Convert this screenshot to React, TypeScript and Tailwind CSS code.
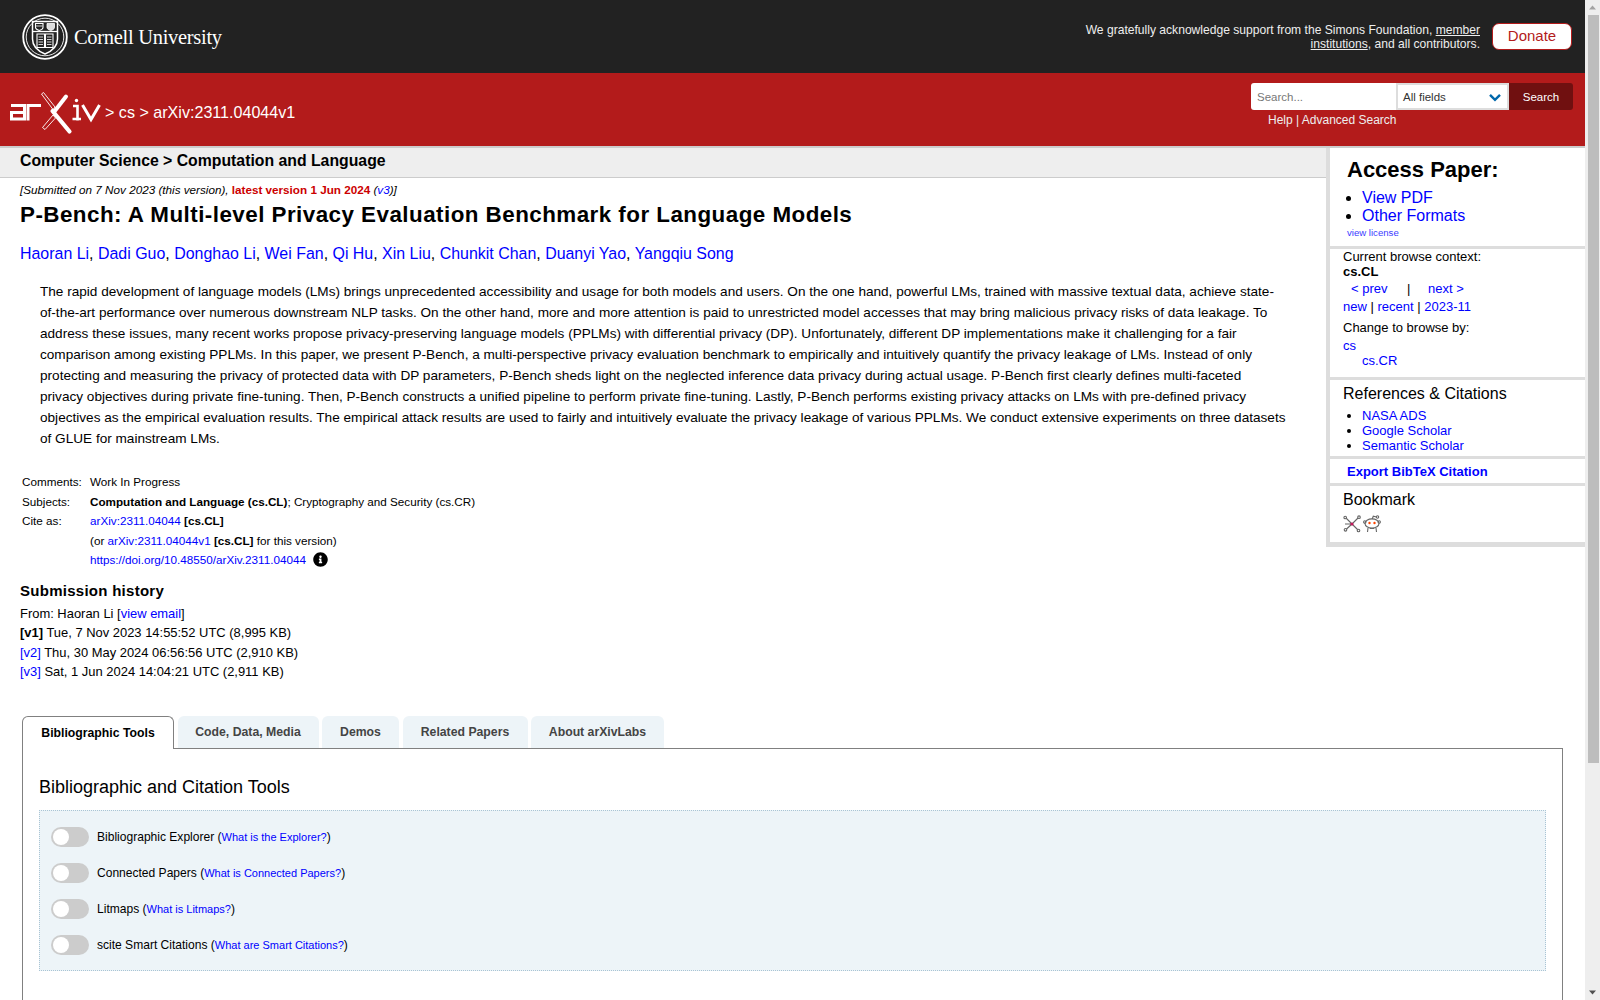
import { FaInfoCircle } from "react-icons/fa";

const authors = [
  "Haoran Li",
  "Dadi Guo",
  "Donghao Li",
  "Wei Fan",
  "Qi Hu",
  "Xin Liu",
  "Chunkit Chan",
  "Duanyi Yao",
  "Yangqiu Song",
];

const abstractText =
  "The rapid development of language models (LMs) brings unprecedented accessibility and usage for both models and users. On the one hand, powerful LMs, trained with massive textual data, achieve state-of-the-art performance over numerous downstream NLP tasks. On the other hand, more and more attention is paid to unrestricted model accesses that may bring malicious privacy risks of data leakage. To address these issues, many recent works propose privacy-preserving language models (PPLMs) with differential privacy (DP). Unfortunately, different DP implementations make it challenging for a fair comparison among existing PPLMs. In this paper, we present P-Bench, a multi-perspective privacy evaluation benchmark to empirically and intuitively quantify the privacy leakage of LMs. Instead of only protecting and measuring the privacy of protected data with DP parameters, P-Bench sheds light on the neglected inference data privacy during actual usage. P-Bench first clearly defines multi-faceted privacy objectives during private fine-tuning. Then, P-Bench constructs a unified pipeline to perform private fine-tuning. Lastly, P-Bench performs existing privacy attacks on LMs with pre-defined privacy objectives as the empirical evaluation results. The empirical attack results are used to fairly and intuitively evaluate the privacy leakage of various PPLMs. We conduct extensive experiments on three datasets of GLUE for mainstream LMs.";

const tabs = [
  { label: "Code, Data, Media", width: "w-[141px]" },
  { label: "Demos", width: "w-[77px]" },
  { label: "Related Papers", width: "w-[125px]" },
  { label: "About arXivLabs", width: "w-[133px]" },
];

const tools = [
  { name: "Bibliographic Explorer", link: "What is the Explorer?" },
  { name: "Connected Papers", link: "What is Connected Papers?" },
  { name: "Litmaps", link: "What is Litmaps?" },
  { name: "scite Smart Citations", link: "What are Smart Citations?" },
];

function CornellSeal() {
  return (
    <svg width="46" height="46" viewBox="0 0 46 46" fill="none" stroke="#fff" className="shrink-0">
      <circle cx="23" cy="23" r="21.8" strokeWidth="1.8" />
      <circle cx="23" cy="23" r="18.8" strokeWidth="0.9" />
      <path d="M10.5 7.5H35.5V25C35.5 33 29 37.5 23 40C17 37.5 10.5 33 10.5 25Z" strokeWidth="1.5" />
      <path d="M11 17.5H35" strokeWidth="1.3" />
      <path d="M13.5 9.5H21V13.5C21 15 19 16 17.2 16.5C15.5 16 13.5 15 13.5 13.5Z" strokeWidth="1.1" />
      <path d="M25 9.5H32.5V13.5C32.5 15 30.5 16 28.8 16.5C27 16 25 15 25 13.5Z" fill="#ddd" strokeWidth="0.8" />
      <path d="M14 12H20.5" strokeWidth="0.8" />
      <path d="M15 20H22.5V33.5H15ZM23.5 20H31V33.5H23.5Z" strokeWidth="1.1" />
      <path d="M16.5 23H21M16.5 25.5H21M16.5 28H21M16.5 30.5H21M25 23H29.5M25 25.5H29.5M25 28H29.5M25 30.5H29.5" strokeWidth="0.8" />
    </svg>
  );
}

function ArxivLogo() {
  return (
    <svg width="100" height="50" viewBox="0 0 100 50" fill="none" stroke="#fff" className="shrink-0">
      <path d="M6 17.5H19.5V31H6.5V24.5H19.5" strokeWidth="3" />
      <path d="M23 32.5V17.5H36" strokeWidth="3" />
      <path d="M61 8.5L49 24" strokeWidth="4" strokeLinecap="round" />
      <path d="M48 27L37.5 39.5L40 41.5L50.5 30Z" strokeWidth="0.9" />
      <path d="M36.5 6L38.5 4.5L50 19L48 21.5Z" strokeWidth="0.9" />
      <path d="M47.5 23L64.5 43.5" strokeWidth="4.2" strokeLinecap="round" />
      <path d="M68 18H72.5V32.5M67.5 31H76" strokeWidth="2.6" />
      <circle cx="71.5" cy="12.5" r="1.7" fill="#fff" stroke="none" />
      <path d="M77.5 17L86 31.5L94.5 17" strokeWidth="3" />
    </svg>
  );
}

function BibsonomyIcon() {
  return (
    <svg width="18" height="18" viewBox="0 0 18 18" fill="none" stroke="#666" strokeWidth="1.1" className="shrink-0">
      <path d="M2 2L9 9L15.5 15.5M16 2L9 9L3 14.5M9 9L2 9" />
      <circle cx="2.2" cy="2.5" r="1.3" fill="#fff" />
      <circle cx="15.5" cy="15.5" r="1.3" fill="#fff" />
      <circle cx="2.5" cy="14.8" r="1.3" fill="#fff" />
      <circle cx="16" cy="2.2" r="1.3" fill="#fff" />
      <circle cx="9" cy="9" r="1.6" fill="#c2185b" stroke="none" />
    </svg>
  );
}

function RedditIcon() {
  return (
    <svg width="18" height="18" viewBox="0 0 18 18" fill="none" stroke="#666" strokeWidth="1.1" className="shrink-0">
      <ellipse cx="9" cy="8.5" rx="7" ry="4.6" fill="#fff" />
      <path d="M9.2 4L10.3 1.2L13.5 2" />
      <circle cx="14.5" cy="2" r="1.2" />
      <circle cx="1.8" cy="7" r="1.2" />
      <circle cx="16.2" cy="7" r="1.2" />
      <circle cx="6.5" cy="8" r="1.2" fill="#ff4500" stroke="none" />
      <circle cx="11.5" cy="8" r="1.2" fill="#ff4500" stroke="none" />
      <path d="M5 13L4.5 17M13 13L13.5 17M6.8 13.5H11.2" />
    </svg>
  );
}

function Toggle() {
  return (
    <div className="w-[38px] h-5 rounded-full bg-[#ccc] flex items-center pl-[2px] shrink-0">
      <div className="w-4 h-4 rounded-full bg-white" />
    </div>
  );
}

function MetaRow({ label, children }: { label: string; children: React.ReactNode }) {
  return (
    <div className="flex">
      <div className="w-[68px] shrink-0">{label}</div>
      <div>{children}</div>
    </div>
  );
}

export default function App() {
  return (
    <div className="flex h-screen overflow-hidden bg-white text-black font-['Liberation_Sans',Arial,sans-serif]">
      <div className="w-[1585px] shrink-0">
        <div className="h-[73px] bg-[#222] flex items-center justify-between pl-[22px] pr-[13px]">
          <div className="flex items-center gap-[6px]">
            <CornellSeal />
            <span className="font-['Liberation_Serif',serif] text-[20.5px] pt-[2px] text-white tracking-[-0.3px]">Cornell University</span>
          </div>
          <div className="flex items-center gap-3 mb-[1px]">
            <p className="w-[400px] pt-[2px] text-right text-[12.1px] leading-[14px] text-[#eee]">
              We gratefully acknowledge support from the Simons Foundation, <span className="underline">member</span> <span className="underline">institutions</span>, and all contributors.
            </p>
            <div className="w-[80px] h-[27px] rounded-[7px] bg-white border border-[#b31b1b] text-[#b31b1b] text-[15px] flex items-center justify-center">Donate</div>
          </div>
        </div>

        <div className="h-[73px] bg-[#b31b1b] flex justify-between pl-[5px] pr-3">
          <div className="flex items-center text-white text-[16.1px] pt-[6px]">
            <ArxivLogo />
            <span>&gt; cs &gt; arXiv:2311.04044v1</span>
          </div>
          <div className="pt-[10px]">
            <div className="flex h-[27px] text-[11.5px]">
              <div className="w-[145px] pt-[2px] bg-white rounded-l-[3px] text-[#777] pl-[6px] flex items-center">Search...</div>
              <div className="w-[113px] pt-[1px] bg-white border-2 border-[#ddd] text-[#333] pl-[5px] pr-[6px] flex items-center justify-between">
                <span className="pt-[1px]">All fields</span>
                <svg width="12" height="9" viewBox="0 0 12 9" fill="none" stroke="#0068ac" strokeWidth="2.4">
                  <path d="M1 1.8L6 6.8L11 1.8" />
                </svg>
              </div>
              <div className="w-[64px] pt-[3px] bg-[#701010] rounded-r-[3px] text-white flex items-center justify-center">Search</div>
            </div>
            <div className="ml-[17px] mt-[2px] text-xs leading-[17px] text-[#eee]">Help | Advanced Search</div>
          </div>
        </div>

        <div className="flex items-start border-t-2 border-[#ccc]">
          <div className="w-[1326px] shrink-0">
            <div className="h-[30px] bg-[#eee] border-b border-[#ccc] pl-5 pb-[4px] flex items-center font-bold text-[15.8px]">
              Computer Science &gt; Computation and Language
            </div>
            <div className="pl-5 pr-10">
              <p className="mt-[5px] text-[11.7px] leading-[14px] italic">
                [Submitted on 7 Nov 2023 (this version), <span className="font-bold not-italic text-[#c00]">latest version 1 Jun 2024</span> (<a className="text-[#00f]">v3</a>)]
              </p>
              <h1 className="mt-[3px] text-[22.4px] tracking-[0.46px] leading-[30px] font-bold">
                P-Bench: A Multi-level Privacy Evaluation Benchmark for Language Models
              </h1>
              <div className="mt-[14px] text-[15.95px] leading-[20px]">
                {authors.map((a, i) => (
                  <span key={a}>
                    <a className="text-[#00f]">{a}</a>
                    {i < authors.length - 1 && ", "}
                  </span>
                ))}
              </div>
              <p className="mt-[17px] ml-5 w-[1247px] text-[13.6px] leading-[21px]">{abstractText}</p>
              <div className="mt-[23px] ml-[2px] text-[11.7px] leading-[19.5px]">
                <MetaRow label="Comments:">Work In Progress</MetaRow>
                <MetaRow label="Subjects:">
                  <b>Computation and Language (cs.CL)</b>; Cryptography and Security (cs.CR)
                </MetaRow>
                <MetaRow label="Cite as:">
                  <a className="text-[#00f]">arXiv:2311.04044</a> <b>[cs.CL]</b>
                </MetaRow>
                <MetaRow label="">
                  (or <a className="text-[#00f]">arXiv:2311.04044v1</a> <b>[cs.CL]</b> for this version)
                </MetaRow>
                <MetaRow label="">
                  <span className="flex items-center gap-[7px]">
                    <a className="text-[#00f]">https://doi.org/10.48550/arXiv.2311.04044</a>
                    <FaInfoCircle className="text-[15px]" />
                  </span>
                </MetaRow>
              </div>
              <h2 className="mt-[11px] text-[15px] tracking-[0.27px] leading-[20px] font-bold">Submission history</h2>
              <div className="mt-[3px] text-[12.95px] leading-[19.6px]">
                <div>From: Haoran Li [<a className="text-[#00f]">view email</a>]</div>
                <div><b>[v1]</b> Tue, 7 Nov 2023 14:55:52 UTC (8,995 KB)</div>
                <div><a className="text-[#00f]">[v2]</a> Thu, 30 May 2024 06:56:56 UTC (2,910 KB)</div>
                <div><a className="text-[#00f]">[v3]</a> Sat, 1 Jun 2024 14:04:21 UTC (2,911 KB)</div>
              </div>
            </div>
          </div>

          <aside className="w-[259px] shrink-0 border-l-4 border-b-[5px] border-[#ddd]">
            <div className="h-[101px] border-b-[3px] border-[#ddd] pl-[17px]">
              <h2 className="pt-[9px] text-[22px] leading-[26px] font-bold">Access Paper:</h2>
              <ul className="mt-[6px] pl-[15px] list-disc text-base leading-[18px]">
                <li><a className="text-[#00f]">View PDF</a></li>
                <li><a className="text-[#00f]">Other Formats</a></li>
              </ul>
              <div className="mt-[1px] text-[9.6px] leading-[14px] text-[#3c3cff]">view license</div>
            </div>
            <div className="h-[131px] border-b-[3px] border-[#ddd] pl-[13px] text-[13px]">
              <div className="leading-[15px]">Current browse context:</div>
              <div className="font-bold leading-[15px]">cs.CL</div>
              <div className="mt-[1px] leading-[18px] flex pl-2">
                <a className="text-[#00f] w-[56px]">&lt; prev</a>
                <span className="w-[21px]">|</span>
                <a className="text-[#00f]">next &gt;</a>
              </div>
              <div className="leading-[18px]">
                <a className="text-[#00f]">new</a> | <a className="text-[#00f]">recent</a> | <a className="text-[#00f]">2023-11</a>
              </div>
              <div className="mt-[3px] leading-[18px]">Change to browse by:</div>
              <div className="leading-[17px]"><a className="text-[#00f]">cs</a></div>
              <div className="pl-[19px] leading-[13px]"><a className="text-[#00f]">cs.CR</a></div>
            </div>
            <div className="h-[79px] border-b-[3px] border-[#ddd] pl-[13px]">
              <h3 className="pt-[4px] text-base leading-[20px]">References &amp; Citations</h3>
              <ul className="mt-[4px] pl-[19px] list-disc text-[13px] leading-[15px]">
                <li><a className="text-[#00f]">NASA ADS</a></li>
                <li><a className="text-[#00f]">Google Scholar</a></li>
                <li><a className="text-[#00f]">Semantic Scholar</a></li>
              </ul>
            </div>
            <div className="h-[27px] border-b-[3px] border-[#ddd] pl-[17px] pt-[1px] flex items-center text-[13px] font-bold text-[#00f]">
              Export BibTeX Citation
            </div>
            <div className="h-[56px] pl-[13px]">
              <h3 className="pt-[4px] text-base leading-[20px]">Bookmark</h3>
              <div className="mt-[5px] flex gap-[2px]">
                <BibsonomyIcon />
                <RedditIcon />
              </div>
            </div>
          </aside>
        </div>

        <div className="mt-[34px] ml-[22px] w-[1541px]">
          <div className="flex gap-[3.5px] h-[33px] text-[12.25px] font-bold">
            <div className="w-[152px] h-[33px] pt-[1px] relative z-10 bg-white border border-b-0 border-[#808080] rounded-t-[6px] flex items-center justify-center">
              Bibliographic Tools
            </div>
            {tabs.map((t) => (
              <div key={t.label} className={`${t.width} h-[32px] pt-[1px] bg-[#edf4f8] rounded-t-[6px] text-[#444] flex items-center justify-center`}>
                {t.label}
              </div>
            ))}
          </div>
          <div className="border border-[#808080] -mt-[1px] h-[400px] px-4">
            <h2 className="mt-[25px] text-[18px] leading-[26px]">Bibliographic and Citation Tools</h2>
            <div className="mt-[10px] h-[161px] bg-[#edf4f8] border border-dotted border-[#a9c4d4] pl-[11px] pt-[16px] flex flex-col gap-4 text-[12.05px]">
              {tools.map((t) => (
                <div key={t.name} className="flex items-center gap-2 h-5">
                  <Toggle />
                  <span className="pt-[1px]">
                    {t.name} (<a className="text-[#00f] text-[11px]">{t.link}</a>)
                  </span>
                </div>
              ))}
            </div>
          </div>
        </div>
      </div>

      <div className="w-[15px] shrink-0 bg-[#eee] flex flex-col items-center">
        <svg width="15" height="15" viewBox="0 0 15 15" className="shrink-0">
          <path d="M4 9.5L7.5 5.5L11 9.5Z" fill="#a3a3a3" />
        </svg>
        <div className="w-[11px] ml-[2px] h-[748px] bg-[#bdbdbd]" />
        <svg width="15" height="15" viewBox="0 0 15 15" className="shrink-0 mt-auto">
          <path d="M4 5.5L7.5 9.5L11 5.5Z" fill="#505050" />
        </svg>
      </div>
    </div>
  );
}
